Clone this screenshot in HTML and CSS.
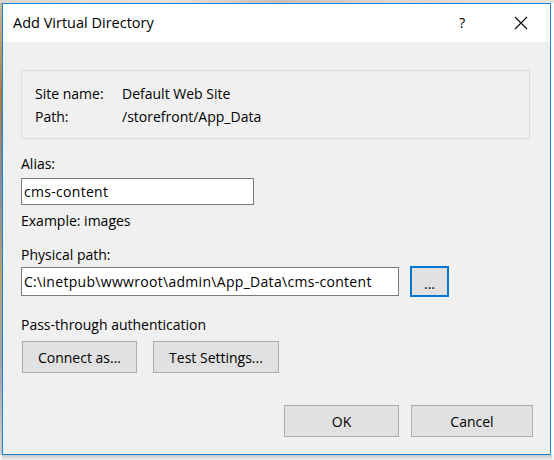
FILE: index.html
```html
<!DOCTYPE html>
<html>
<head>
<meta charset="utf-8">
<link rel="stylesheet" href="styles.css">
</head>
<body>
<div class="backdrop-top"></div>
<div class="stage">
  <div class="backdrop-left"></div>
  <div class="dialog">
    <div class="titlebar">
      <span class="title">Add Virtual Directory</span>
      <span class="help">?</span>
      <span class="close">
        <svg width="14" height="14" viewBox="0 0 14 14"><path d="M1 1 L13 13 M13 1 L1 13" stroke="#000" stroke-width="1.1" fill="none"/></svg>
      </span>
    </div>
    <div class="content">
      <div class="infobox">
        <div class="inforow"><span class="infokey">Site name:</span><span>Default Web Site</span></div>
        <div class="inforow"><span class="infokey">Path:</span><span>/storefront/App_Data</span></div>
      </div>
      <div class="label alias-label">Alias:</div>
      <div class="textbox alias-box">cms-content</div>
      <div class="hint">Example: images</div>
      <div class="label phys-label">Physical path:</div>
      <div class="pathrow">
        <div class="textbox path-box">C:\inetpub\wwwroot\admin\App_Data\cms-content</div>
        <div class="btn browse">...</div>
      </div>
      <div class="label pass-label">Pass-through authentication</div>
      <div class="btnrow">
        <div class="btn connect">Connect as...</div>
        <div class="btn test">Test Settings...</div>
      </div>
      <div class="footer">
        <div class="btn ok">OK</div>
        <div class="btn cancel">Cancel</div>
      </div>
    </div>
  </div>
  <div class="backdrop-right"></div>
</div>
<div class="shadow"></div>
</body>
</html>
```

FILE: styles.css
```css
html, body {
  margin: 0;
  padding: 0;
  width: 554px;
  height: 460px;
  overflow: hidden;
  background: #f4f4f4;
  font-family: "Open Sans", "Noto Sans", sans-serif;
  font-size: 14px;
  color: #000;
}
.backdrop-top {
  height: 3px;
  background: linear-gradient(90deg, #d9d6cf 0, #e8e4dc 30%, #c9c2b4 50%, #ddd8cc 70%, #e6e3dd 100%);
}
.stage {
  display: flex;
  height: 452px;
}
.backdrop-left {
  width: 2px;
  background: linear-gradient(180deg, #c8b89a 0, #a67c4a 20%, #7d8fa8 40%, #b8a070 60%, #9aa4b4 80%, #d0d0d0 100%);
}
.backdrop-right {
  width: 3px;
  background: #fbfbfb;
}
.dialog {
  width: 547px;
  border: 1px solid #1883d7;
  background: #f0f0f0;
  display: flex;
  flex-direction: column;
}
.titlebar {
  height: 38px;
  background: #fff;
  display: flex;
  align-items: center;
  padding-left: 10px;
}
.title {
  font-size: 14.5px;
  flex: 1;
  padding-bottom: 1px;
}
.help {
  font-size: 14.5px;
  width: 55px;
  text-align: left;
  padding-bottom: 2px;
}
.close {
  width: 36px;
  display: flex;
  align-items: center;
}
.content {
  padding: 28px 0 0 18px;
  display: flex;
  flex-direction: column;
  flex: 1;
}
.infobox {
  width: 509px;
  height: 69px;
  border: 1px solid #dcdcdc;
  padding: 11px 0 0 13px;
  box-sizing: border-box;
}
.inforow {
  display: flex;
  height: 23px;
  line-height: 23px;
}
.infokey {
  width: 87px;
}
.label {
  line-height: 18px;
}
.alias-label {
  margin-top: 16px;
}
.textbox {
  border: 1px solid #7a7a7a;
  background: #fff;
  box-sizing: border-box;
  padding-left: 2px;
  display: flex;
  align-items: center;
}
.alias-box {
  margin-top: 5px;
  width: 233px;
  height: 27px;
  letter-spacing: 0.3px;
}
.hint {
  margin-top: 7px;
  line-height: 18px;
}
.phys-label {
  margin-top: 16px;
}
.pathrow {
  display: flex;
  margin-top: 2px;
  gap: 11px;
  align-items: center;
}
.path-box {
  width: 378px;
  height: 29px;
  letter-spacing: 0.3px;
}
.btn {
  background: #e1e1e1;
  border: 1px solid #adadad;
  box-sizing: border-box;
  display: flex;
  align-items: center;
  justify-content: center;
  height: 32px;
}
.browse {
  width: 39px;
  border: 2px solid #0078d7;
  padding-top: 3px;
  height: 31px;
}
.pass-label {
  margin-top: 19px;
}
.btnrow {
  display: flex;
  gap: 16px;
  margin-top: 7px;
  margin-left: 1px;
}
.connect { width: 115px; }
.test { width: 126px; }
.footer {
  display: flex;
  justify-content: flex-end;
  gap: 12px;
  margin-top: 32px;
  padding-right: 17px;
}
.ok { width: 115px; }
.cancel { width: 122px; }
.shadow {
  height: 5px;
  margin-left: 2px;
  width: 550px;
  background: linear-gradient(180deg, #c9c9c9, #efefef);
}
```
